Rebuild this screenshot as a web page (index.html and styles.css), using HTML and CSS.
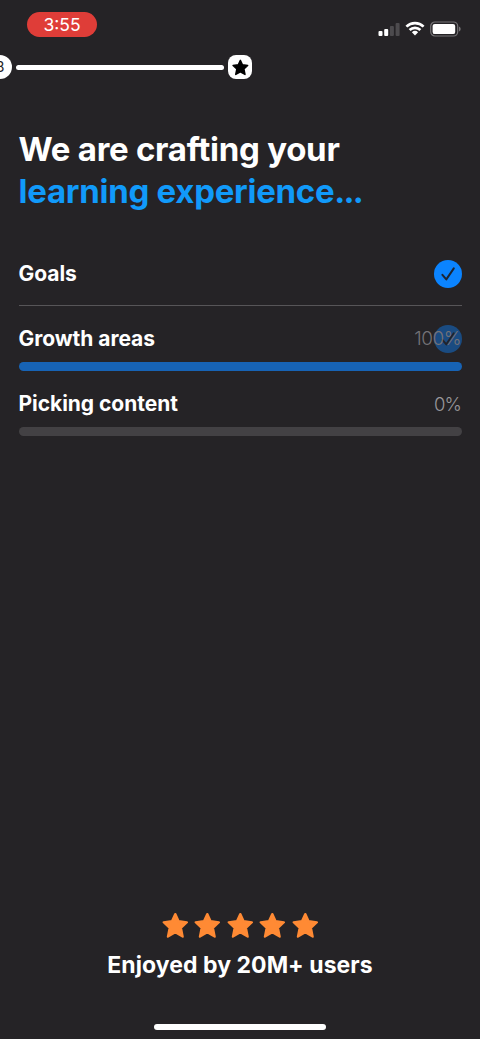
FILE: index.html
```html
<!DOCTYPE html>
<html lang="en">
<head>
<meta charset="utf-8">
<meta name="viewport" content="width=device-width, initial-scale=1">
<title>Learning experience</title>
<link rel="stylesheet" href="styles.css">
</head>
<body>
<svg class="defs" width="0" height="0" aria-hidden="true">
  <symbol id="star" viewBox="0 0 26 26"><path d="M12.8 2 16 8.9 24 9.9 18.2 15.2 19.9 23.7 12.8 19.6 5.7 23.7 7.4 15.2 1.6 9.9 9.6 8.9Z" fill="currentColor" stroke="currentColor" stroke-width="2.2" stroke-linejoin="round"/></symbol>
  <symbol id="check" viewBox="0 0 28 28"><circle cx="14" cy="14" r="14" fill="#0b84ff"/><path d="M8.4 14.8 12.3 19.4 19.8 8.4" fill="none" stroke="#1d2533" stroke-width="2" stroke-linecap="round" stroke-linejoin="round"/></symbol>
</svg>
<div class="screen">
  <header class="status">
    <span class="time">3:55</span>
    <span class="indicators">
      <svg width="22" height="14" viewBox="0 0 22 14"><g fill="#fff"><rect x="0.5" y="9" width="4" height="5" rx="1"/><rect x="6.2" y="7" width="4" height="7" rx="1"/></g><g fill="#4d4b4e"><rect x="11.9" y="4" width="4" height="10" rx="1"/><rect x="17.6" y="1" width="4" height="13" rx="1"/></g></svg>
      <svg width="20" height="15" viewBox="0 0 20 15"><g fill="none" stroke="#fff" stroke-width="2.7"><path d="M1.4 5.6a12.4 12.4 0 0 1 17.2 0"/><path d="M4.6 9a7.8 7.8 0 0 1 10.8 0"/></g><path d="M10 14.4 6.9 11.3a4.5 4.5 0 0 1 6.2 0Z" fill="#fff"/></svg>
      <svg width="31" height="16" viewBox="0 0 31 16"><rect x="0.7" y="1" width="27" height="14" rx="4.2" fill="none" stroke="#767477" stroke-width="1.2"/><rect x="2.6" y="2.9" width="22.6" height="10.2" rx="2.2" fill="#fff"/><path d="M29 5.5v5q1.7-.9 1.7-2.5T29 5.5Z" fill="#767477"/></svg>
    </span>
  </header>
  <nav class="steps">
    <span class="step-number">3</span>
    <span class="step-line"></span>
    <span class="step-goal"><svg width="17" height="17"><use href="#star"/></svg></span>
  </nav>
  <main class="content">
    <h1 class="title">We are crafting your<br><span class="accent">learning experience<span class="dots">...</span></span></h1>
    <section class="tasks">
      <div class="task done">
        <div class="task-head"><span>Goals</span><svg class="check" width="28" height="28"><use href="#check"/></svg></div>
      </div>
      <div class="task">
        <div class="task-head"><span>Growth areas</span><span class="state"><svg class="check fading" width="28" height="28"><use href="#check"/></svg><span class="percent dim">100%</span></span></div>
        <div class="bar full"></div>
      </div>
      <div class="task">
        <div class="task-head"><span>Picking content</span><span class="percent">0%</span></div>
        <div class="bar"></div>
      </div>
    </section>
  </main>
  <footer class="footer">
    <div class="stars">
      <svg width="27" height="27"><use href="#star"/></svg>
      <svg width="27" height="27"><use href="#star"/></svg>
      <svg width="27" height="27"><use href="#star"/></svg>
      <svg width="27" height="27"><use href="#star"/></svg>
      <svg width="27" height="27"><use href="#star"/></svg>
    </div>
    <p class="tagline">Enjoyed by 20M+ users</p>
    <div class="home-bar"></div>
  </footer>
</div>
</body>
</html>
```
FILE: styles.css
```css
* { box-sizing: border-box; }
body { margin: 0; background: #252326; color: #fff; font-family: Inter, "Liberation Sans", sans-serif; }
svg { display: block; flex: none; }
.defs { position: absolute; }
.screen { height: 1039px; display: flex; flex-direction: column; overflow: hidden; }
.status { height: 55px; padding: 12px 19.3px 0 27px; display: flex; justify-content: space-between; align-items: flex-start; }
.time { width: 70px; height: 25px; border-radius: 13px; background: #df3d38; font-size: 17.5px; line-height: 26px; text-align: center; }
.indicators { display: flex; align-items: center; gap: 5px; padding-top: 8.5px; }
.steps { height: 24px; display: flex; align-items: center; gap: 4px; margin-left: -12px; }
.step-number { width: 24px; height: 24px; border-radius: 12px; background: #fff; color: #252326; font-size: 14px; line-height: 24px; text-align: center; }
.step-line { width: 208px; height: 5px; border-radius: 3px; background: #fff; }
.step-goal { width: 24px; height: 24px; border-radius: 8px; background: #fff; color: #000; display: grid; place-items: center; }
.content { padding: 49px 18.5px 0; }
.title { margin: 0 0 28px; font-size: 33px; line-height: 42px; font-weight: 700; letter-spacing: -0.27px; white-space: nowrap; }
.accent { color: #119afa; }
.dots { letter-spacing: -1.8px; }
.task { height: 65px; display: flex; flex-direction: column; justify-content: space-between; }
.tasks { padding-top: 1px; }
.done { border-bottom: 1px solid #575558; }
.task-head { height: 28px; margin-top: 19px; display: flex; align-items: center; justify-content: space-between; font-size: 21px; line-height: 28px; font-weight: 700; letter-spacing: -0.04px; }
.state { display: grid; align-items: center; justify-items: end; }
.state > * { grid-area: 1 / 1; }
.fading { opacity: .42; }
.percent { font-size: 18.5px; font-weight: 300; letter-spacing: -0.9px; color: #99979b; padding-right: 0.5px; }
.dim { z-index: 1; font-size: 19px; letter-spacing: -0.5px; color: #747277; }
.bar { height: 9px; border-radius: 5px; background: #434144; }
.full { background: #1763b5; }
.footer { margin-top: auto; padding-bottom: 9px; display: flex; flex-direction: column; align-items: center; }
.stars { display: flex; gap: 5.5px; color: #ff8a34; }
.tagline { margin: 11px 0 44px; font-size: 23px; line-height: 30px; font-weight: 700; letter-spacing: 0.05px; }
.home-bar { width: 172px; height: 6px; border-radius: 3px; background: #fff; }
```
